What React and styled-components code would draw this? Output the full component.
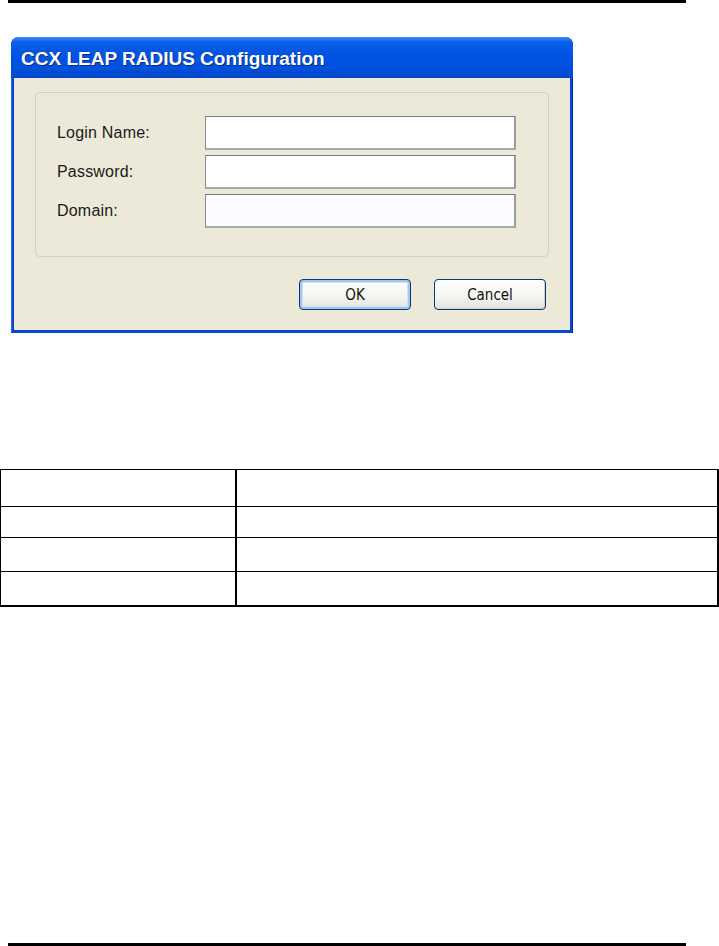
import React from "react";
import styled, { createGlobalStyle } from "styled-components";

const Global = createGlobalStyle`
  html, body {
    margin: 0;
    padding: 0;
    background: #ffffff;
  }
  body {
    font-family: "Liberation Sans", Arial, sans-serif;
  }
`;

const Page = styled.div`
  width: 719px;
  height: 946px;
  display: flex;
  flex-direction: column;
  overflow: hidden;
`;

const Rule = styled.div`
  width: 678px;
  height: 3px;
  margin-left: 8px;
  background: #000;
  flex-shrink: 0;
`;

const Dialog = styled.div`
  width: 562px;
  height: 296px;
  margin: 34px 0 0 11px;
  display: flex;
  flex-direction: column;
  border-radius: 8px 8px 0 0;
  background: #0a46d6;
  padding: 0 3px 3px 3px;
  box-sizing: border-box;
  box-shadow: inset 1px 0 0 #2b6be6, inset -1px 0 0 #0030b0;
`;

const TitleBar = styled.div`
  height: 41px;
  flex-shrink: 0;
  display: flex;
  align-items: center;
  margin: 0 -3px;
  padding: 3px 0 0 10px;
  border-radius: 8px 8px 0 0;
  background: linear-gradient(
    to bottom,
    #3d8ffb 0%,
    #0a5fe8 12%,
    #0154e3 40%,
    #0050dc 80%,
    #0346c6 100%
  );
  color: #fff;
  font-family: "Liberation Sans", Arial, sans-serif;
  font-weight: bold;
  font-size: 19px;
  text-shadow: 1px 1px 0 #0a2a8a;
  box-sizing: border-box;
`;

const Body = styled.div`
  flex: 1;
  background: #ece9d8;
  padding: 14px 21px 0 21px;
  display: flex;
  flex-direction: column;
  box-sizing: border-box;
`;

const Group = styled.div`
  height: 165px;
  border: 1px solid #d0d0bf;
  border-radius: 5px;
  box-sizing: border-box;
  padding: 23px 31px 0 21px;
  display: flex;
  flex-direction: column;
  gap: 5px;
`;

const Row = styled.div`
  display: flex;
  align-items: center;
  height: 34px;
`;

const Label = styled.label`
  width: 148px;
  font-size: 16px;
  color: #1a1a1a;
  letter-spacing: 0.2px;
`;

const Field = styled.div`
  width: 311px;
  height: 34px;
  box-sizing: border-box;
  border: 1px solid #8a8a8a;
  border-top-color: #7a7a7a;
  border-right: 2px solid #9c9c9c;
  border-bottom: 2px solid #a8a8a8;
  background: ${(p) => (p.$tint ? "#fafcff" : "#ffffff")};
`;

const Buttons = styled.div`
  display: flex;
  justify-content: flex-end;
  gap: 23px;
  margin-top: 22px;
  padding-right: 3px;
`;

const Button = styled.div`
  width: 112px;
  height: 31px;
  box-sizing: border-box;
  border: 1px solid #003c74;
  border-radius: 4px;
  display: flex;
  align-items: center;
  justify-content: center;
  font-family: "DejaVu Sans Condensed", "DejaVu Sans", sans-serif;
  font-size: 15px;
  color: #111;
  background: linear-gradient(to bottom, #ffffff 0%, #f4f4f0 60%, #e3e2da 100%);
  box-shadow: ${(p) =>
    p.$default
      ? "inset 0 0 0 2px #a8c4ee, inset 0 0 0 3px #cfdff6"
      : "inset -1px -1px 0 #d6d0c5"};
`;

const Table = styled.table`
  width: 719px;
  margin-top: 136px;
  border-collapse: collapse;
  flex-shrink: 0;
  border-left: 1px solid #000;
  border-right: 2px solid #000;
  border-top: 1px solid #000;
  border-bottom: 2px solid #000;
`;

const Cell = styled.td`
  height: ${(p) => p.$h}px;
  padding: 0;
  border-bottom: 1px solid #000;
  &:first-child {
    width: 234px;
    border-right: 2px solid #000;
  }
`;

const Spacer = styled.div`
  flex: 1;
`;

const rows = [36, 30, 33, 33];

export default function App() {
  return (
    <Page>
      <Global />
      <Rule />
      <Dialog>
        <TitleBar>CCX LEAP RADIUS Configuration</TitleBar>
        <Body>
          <Group>
            <Row>
              <Label>Login Name:</Label>
              <Field />
            </Row>
            <Row>
              <Label>Password:</Label>
              <Field />
            </Row>
            <Row>
              <Label>Domain:</Label>
              <Field $tint />
            </Row>
          </Group>
          <Buttons>
            <Button $default>OK</Button>
            <Button>Cancel</Button>
          </Buttons>
        </Body>
      </Dialog>
      <Table>
        <tbody>
          {rows.map((h, i) => (
            <tr key={i}>
              <Cell $h={h} />
              <Cell $h={h} />
            </tr>
          ))}
        </tbody>
      </Table>
      <Spacer />
      <Rule />
    </Page>
  );
}
